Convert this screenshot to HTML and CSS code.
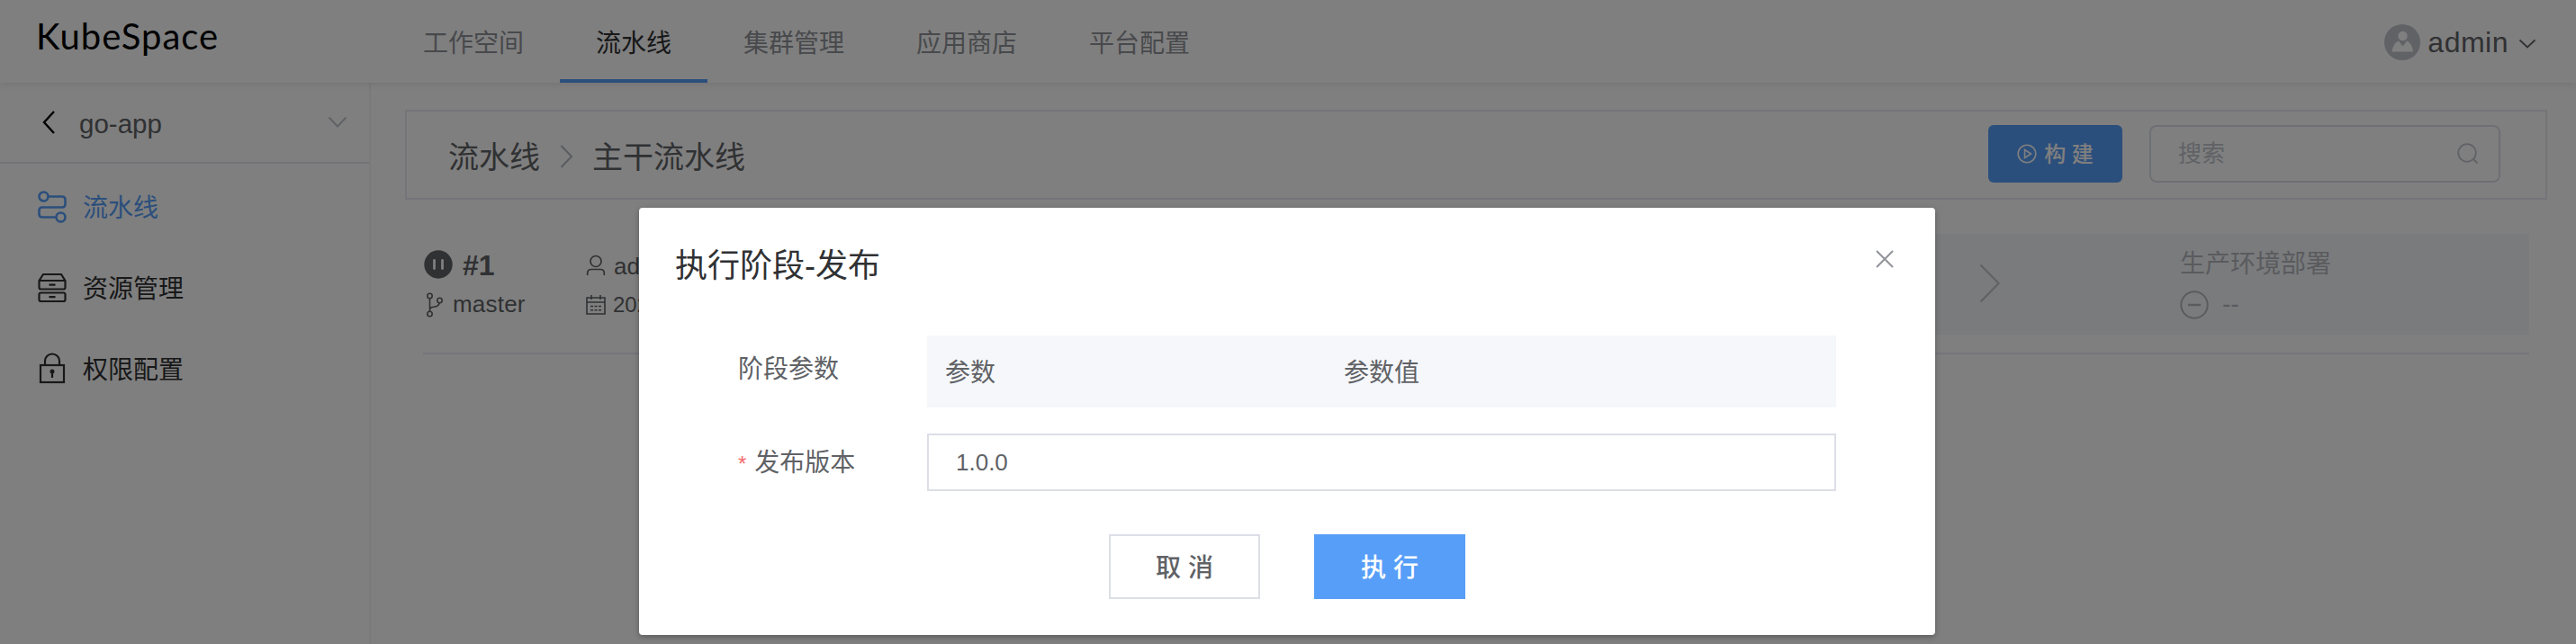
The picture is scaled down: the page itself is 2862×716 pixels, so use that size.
FILE: index.html
```html
<!DOCTYPE html>
<html lang="zh-CN">
<head>
<meta charset="utf-8">
<title>KubeSpace</title>
<link rel="stylesheet" href="styles.css">
</head>
<body>
<div class="app">
  <header class="header">
    <div class="logo">KubeSpace</div>
    <nav class="nav">
      <span class="nav-item">工作空间</span>
      <span class="nav-item active">流水线</span>
      <span class="nav-item">集群管理</span>
      <span class="nav-item">应用商店</span>
      <span class="nav-item">平台配置</span>
    </nav>
    <div class="user">
      <svg class="avatar" viewBox="0 0 40 40"><circle cx="20" cy="20" r="20" fill="#c0c4cc"/><circle cx="20.500" cy="13" r="5.200" fill="#fff"/><path d="M8.500 30.500C9.500 23 13 19.500 16 18.500L20.500 24.500L25 18.500C28 19.500 31 23 32 30.500Z" fill="#fff"/></svg>
      <span class="user-name">admin</span>
      <svg class="user-caret" viewBox="0 0 20 12"><path d="M1.500 1.500L10 9.500L18.500 1.500" fill="none" stroke="#606266" stroke-width="1.800"/></svg>
    </div>
  </header>
  <div class="body">
    <aside class="sidebar">
      <div class="project">
        <svg class="back" viewBox="0 0 16 28"><path d="M14 2L3 14L14 26" fill="none" stroke="#000" stroke-width="2.400"/></svg>
        <span class="project-name">go-app</span>
        <svg class="project-caret" viewBox="0 0 22 14"><path d="M1.500 1.500L11 11.500L20.500 1.500" fill="none" stroke="#c0c4cc" stroke-width="2"/></svg>
      </div>
      <div class="menu">
        <div class="menu-item active">
          <svg viewBox="0 0 32 36" fill="none" stroke="currentColor" stroke-width="2.600"><circle cx="6.500" cy="6.500" r="5"/><circle cx="25.500" cy="29.500" r="5"/><path d="M11.500 6.500H27Q30.500 6.500 30.500 10V15Q30.500 18.500 27 18.500H5Q1.500 18.500 1.500 22V26Q1.500 29.500 5 29.500H20.500"/></svg>
          <span>流水线</span>
        </div>
        <div class="menu-item">
          <svg viewBox="0 0 32 36" fill="none" stroke="currentColor" stroke-width="2.200"><path d="M6 3H26L30.500 10V17.500Q30.500 19.500 28.500 19.500H3.500Q1.500 19.500 1.500 17.500V10Z M1.500 10H30.500"/><rect x="1.500" y="23.500" width="29" height="9.500" rx="2"/><path d="M12.500 14.700H19.500M12.500 28.200H19.500"/></svg>
          <span>资源管理</span>
        </div>
        <div class="menu-item">
          <svg viewBox="0 0 32 36" fill="none" stroke="currentColor" stroke-width="2.200"><rect x="3" y="14" width="26" height="19"/><path d="M8 14V9.500A8 8 0 0 1 24 9.500V14M16 22V28"/><circle cx="16" cy="21" r="1.400" fill="currentColor"/></svg>
          <span>权限配置</span>
        </div>
      </div>
    </aside>
    <main class="main">
      <div class="crumb-bar">
        <span class="crumb">流水线</span>
        <svg class="crumb-sep" viewBox="0 0 16 26"><path d="M1.500 1L13 13L1.500 25" fill="none" stroke="#b4b8c0" stroke-width="2"/></svg>
        <span class="crumb">主干流水线</span>
        <div class="tools">
          <div class="build"><svg viewBox="0 0 22 22" fill="none" stroke="#fff" stroke-width="1.600"><circle cx="11" cy="11" r="9.800"/><path d="M8.500 6.500L15.500 11L8.500 15.500Z"/></svg><span>构 建</span></div>
          <div class="search"><span>搜索</span><svg viewBox="0 0 24 24" fill="none" stroke="#c0c4cc" stroke-width="1.800"><circle cx="11" cy="11" r="9.800"/><path d="M18 18L22.500 22.500"/></svg></div>
        </div>
      </div>
      <section class="run">
        <div class="run-id">
          <div class="run-line top"><svg class="pause" viewBox="0 0 32 32"><circle cx="16" cy="16" r="15.700" fill="#606266"/><path d="M11.500 11.500V20.500M20.500 11.500V20.500" stroke="#fff" stroke-width="2.800" stroke-linecap="round"/></svg><b>#1</b></div>
          <div class="run-line"><svg class="branch" viewBox="0 0 20 28" fill="none" stroke="#606266" stroke-width="1.600"><circle cx="4.500" cy="4" r="2.700"/><circle cx="4.500" cy="24" r="2.700"/><circle cx="15.500" cy="9" r="2.700"/><path d="M4.500 6.700V21.300M4.500 19.500Q5 16.500 9 16.300Q14.500 16 15.200 11.700"/></svg><span>master</span></div>
        </div>
        <div class="run-meta">
          <div class="run-line top"><svg class="person" viewBox="0 0 22 24" fill="none" stroke="#606266" stroke-width="1.700"><circle cx="11" cy="7.500" r="6"/><path d="M1.700 23V20.500Q1.700 16.500 6 16.500H16Q20.300 16.500 20.300 20.500V23"/></svg><span>admin</span></div>
          <div class="run-line date"><svg class="cal" viewBox="0 0 22 22" fill="none" stroke="#606266" stroke-width="1.600"><path d="M1 3H21V21H1ZM1 8H21M6 0V5M16 0V5"/><path d="M5 12.500H17M5 16.700H17" stroke-dasharray="3 1.500"/></svg><span>202</span></div>
        </div>
        <div class="stage">
          <svg class="stage-arrow" viewBox="0 0 24 44"><path d="M1.500 1.500L21.500 22L1.500 42.500" fill="none" stroke="#c0c4cc" stroke-width="2.200"/></svg>
          <div class="stage-info">
            <div>生产环境部署</div>
            <div class="stage-state"><svg viewBox="0 0 32 32" fill="none" stroke="currentColor" stroke-width="2"><circle cx="16" cy="16" r="14.700"/><path d="M9 16H23" stroke-width="2.500"/></svg><span>--</span></div>
          </div>
        </div>
      </section>
    </main>
  </div>
</div>
<div class="overlay">
  <div class="dialog">
    <div class="dialog-head"><h1>执行阶段-发布</h1>
      <svg class="close" viewBox="0 0 20 20"><path d="M1 1L19 19M19 1L1 19" stroke="#909399" stroke-width="2"/></svg>
    </div>
    <div class="form">
      <div class="label">阶段参数</div>
      <div class="table-head"><span>参数</span><span>参数值</span></div>
      <div class="label version"><i>*</i>发布版本</div>
      <div class="input">1.0.0</div>
    </div>
    <div class="actions"><div class="btn">取 消</div><div class="btn primary">执 行</div></div>
  </div>
</div>
</body>
</html>
```

FILE: styles.css
```css
* { box-sizing: border-box; }
body { margin: 0; width: 2862px; height: 716px; overflow: hidden; background: #fff; color: #606266; font-family: "Liberation Sans", "Noto Sans CJK SC", sans-serif; font-size: 28px; line-height: 40px; }
svg { display: block; flex: none; overflow: visible; }
span { white-space: nowrap; }
.app { height: 716px; display: flex; flex-direction: column; }
.header { height: 92px; flex: none; display: flex; box-shadow: 0 2px 8px rgba(0, 0, 0, .1); z-index: 1; }
.logo { width: 430px; padding: 16px 0 0 40px; font: 40px/48px Lato, sans-serif; letter-spacing: 1px; color: #000; }
.nav { display: flex; }
.nav-item { height: 92px; padding: 29px 40px 0; color: #909399; border-bottom: 4px solid transparent; }
.nav-item.active { color: #303133; border-bottom-color: #579ef8; }
.user { margin-left: auto; padding: 2px 44px 0 0; display: flex; align-items: center; }
.avatar { width: 40px; height: 40px; margin-right: 8px; }
.user-name { font-size: 32px; letter-spacing: .5px; }
.user-caret { width: 20px; height: 12px; margin: 4px 0 0 11px; }
.body { flex: 1; display: flex; }
.sidebar { width: 412px; border-right: 2px solid #f4f4f6; }
.project { height: 90px; border-bottom: 2px solid #e6e6ee; display: flex; align-items: center; padding: 0 24px 0 46px; }
.back { width: 16px; height: 28px; }
.project-name { font-size: 29.5px; margin-left: 26px; padding-top: 3px; }
.project-caret { width: 22px; height: 14px; margin-left: auto; }
.menu { padding-top: 3px; }
.menu-item { height: 90px; padding: 0 0 0 42px; display: flex; align-items: center; gap: 18px; color: #303133; }
.menu-item span { padding-top: 4px; }
.menu-item svg { width: 32px; height: 36px; }
.menu-item.active { color: #579ef8; }
.main { flex: 1; padding: 30px 32px 0 38px; }
.crumb-bar { height: 100px; border: 2px solid #e9e9f2; display: flex; align-items: center; padding: 0 50px 0 46px; font-size: 34px; }
.crumb { padding-top: 6px; }
.crumb-sep { width: 16px; height: 26px; margin: 4px 20px 0 22px; }
.tools { margin-left: auto; display: flex; gap: 30px; }
.build { width: 149px; height: 64px; margin-top: -2px; border-radius: 6px; background: #579ef8; color: #fff; font-size: 24px; font-weight: 500; display: flex; align-items: center; justify-content: center; gap: 8px; }
.build svg { width: 22px; height: 22px; }
.build span { padding-top: 2px; }
.search { width: 390px; height: 64px; margin-top: -2px; border: 2px solid #dcdfe6; border-radius: 8px; padding: 0 22px 0 30px; display: flex; align-items: center; justify-content: space-between; font-size: 26px; color: #c0c4cc; }
.search svg { width: 24px; height: 24px; }
.run { height: 134px; margin: 38px 20px 0; border-bottom: 2px solid #e9e9f2; display: flex; }
.run-id { width: 181px; padding-top: 14px; }
.run-line { display: flex; align-items: center; height: 40px; font-size: 26px; }
.run-line.top { height: 42px; }
.pause { width: 32px; height: 32px; margin: -2px 10px 0 1px; }
.run-line b { font-size: 32px; padding-left: 1px; }
.branch { width: 20px; height: 28px; margin: 1px 10px 0 3px; }
.run-id .run-line:last-child { padding-top: 4px; letter-spacing: .2px; }
.run-meta { width: 240px; padding-top: 14px; }
.person { width: 22px; height: 24px; margin-right: 9px; }
.run-meta .top span { padding-top: 1px; }
.cal { width: 22px; height: 22px; margin-right: 8px; }
.run-line.date { font-size: 24px; padding-top: 5px; }
.stage { flex: 1; height: 112px; background: #f5f7fa; display: flex; justify-content: flex-end; align-items: center; padding-right: 218px; color: #b4b7bd; }
.stage-arrow { width: 24px; height: 44px; margin: -2px 199px 0 0; }
.stage-info { width: 170px; margin-top: -1px; }
.stage-state { display: flex; align-items: center; gap: 15px; padding-top: 2px; }
.stage-state svg { width: 32px; height: 32px; margin-top: 4px; }
.stage-state span { padding-top: 2px; }
.overlay { position: absolute; z-index: 10; top: 0; left: 0; width: 2862px; height: 716px; background: rgba(0, 0, 0, .5); padding: 231px 0 0 710px; }
.dialog { width: 1440px; height: 475px; background: #fff; border-radius: 4px; box-shadow: 0 2px 6px rgba(0, 0, 0, .3); padding: 43px 40px 0; }
.dialog-head { display: flex; justify-content: space-between; }
h1 { margin: 0; font-weight: 400; font-size: 36px; line-height: 44px; color: #303133; }
.close { width: 20px; height: 20px; margin: 4px 6px 0 0; }
.form { margin-top: 55px; padding: 0 70px; display: grid; grid-template-columns: 210px 1010px; row-gap: 29px; }
.label { padding: 18px 0 0; }
.label.version { padding-top: 13px; }
.label i { font-style: normal; color: #f56c6c; font-size: 24px; margin-right: 9px; }
.table-head { height: 80px; background: #f5f7fa; display: grid; grid-template-columns: 443px 1fr; padding: 22px 20px 0; }
.input { height: 64px; border: 2px solid #dcdfe6; padding: 10px 30px; font-size: 26px; }
.actions { display: flex; justify-content: center; gap: 60px; margin-top: 48px; }
.btn { width: 168px; height: 72px; border: 2px solid #dcdfe6; text-align: center; line-height: 71px; font-weight: 500; }
.btn.primary { background: #579ef8; border-color: #579ef8; color: #fff; }
```
